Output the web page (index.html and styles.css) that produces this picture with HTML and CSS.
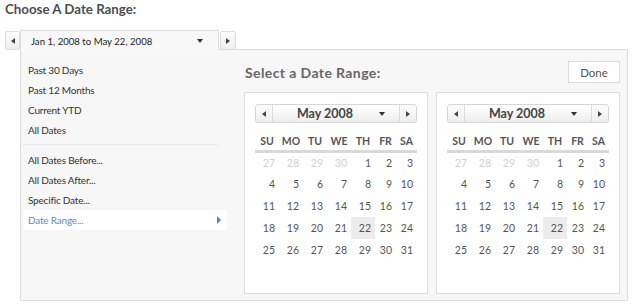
FILE: index.html
```html
<!DOCTYPE html>
<html lang="en">
<head>
    <meta charset="UTF-8">
    <title>Choose A Date Range</title>
    <link rel="stylesheet" href="styles.css">
</head>
<body>
    <h1 class="page-title">Choose A Date Range:</h1>

    <div class="range-bar">
        <button class="step-btn"><span class="tri tri-left"></span></button>
        <div class="range-field">
            <span class="range-text">Jan 1, 2008 to May 22, 2008</span>
            <span class="tri tri-down"></span>
        </div>
        <button class="step-btn step-next"><span class="tri tri-right"></span></button>
    </div>

    <div class="range-panel">
        <ul class="preset-list">
            <li>Past 30 Days</li>
            <li>Past 12 Months</li>
            <li>Current YTD</li>
            <li>All Dates</li>
            <li class="sep"></li>
            <li>All Dates Before...</li>
            <li>All Dates After...</li>
            <li>Specific Date...</li>
            <li class="active">Date Range... <span class="tri tri-blue"></span></li>
        </ul>

        <div class="range-pick">
            <div class="pick-head">
                <h2>Select a Date Range:</h2>
                <button class="done-btn">Done</button>
            </div>
            <div class="cal-row">
                <div class="cal">
                    <div class="cal-nav">
                        <span class="nav-btn"><span class="tri tri-left"></span></span>
                        <span class="nav-mid"><span class="month">May 2008</span><span class="tri tri-down"></span></span>
                        <span class="nav-btn nav-next"><span class="tri tri-right"></span></span>
                    </div>
                    <table class="cal-grid">
                        <colgroup><col class="c24"><col class="c24"><col class="c24"><col class="c24"><col class="c24"><col class="c21"><col class="c21"></colgroup>
                        <tr><th>SU</th><th>MO</th><th>TU</th><th>WE</th><th>TH</th><th>FR</th><th>SA</th></tr>
                        <tr><td class="off">27</td><td class="off">28</td><td class="off">29</td><td class="off">30</td><td>1</td><td>2</td><td>3</td></tr>
                        <tr><td>4</td><td>5</td><td>6</td><td>7</td><td>8</td><td>9</td><td>10</td></tr>
                        <tr><td>11</td><td>12</td><td>13</td><td>14</td><td>15</td><td>16</td><td>17</td></tr>
                        <tr><td>18</td><td>19</td><td>20</td><td>21</td><td class="sel">22</td><td>23</td><td>24</td></tr>
                        <tr><td>25</td><td>26</td><td>27</td><td>28</td><td>29</td><td>30</td><td>31</td></tr>
                    </table>
                </div>
                <div class="cal">
                    <div class="cal-nav">
                        <span class="nav-btn"><span class="tri tri-left"></span></span>
                        <span class="nav-mid"><span class="month">May 2008</span><span class="tri tri-down"></span></span>
                        <span class="nav-btn nav-next"><span class="tri tri-right"></span></span>
                    </div>
                    <table class="cal-grid">
                        <colgroup><col class="c24"><col class="c24"><col class="c24"><col class="c24"><col class="c24"><col class="c21"><col class="c21"></colgroup>
                        <tr><th>SU</th><th>MO</th><th>TU</th><th>WE</th><th>TH</th><th>FR</th><th>SA</th></tr>
                        <tr><td class="off">27</td><td class="off">28</td><td class="off">29</td><td class="off">30</td><td>1</td><td>2</td><td>3</td></tr>
                        <tr><td>4</td><td>5</td><td>6</td><td>7</td><td>8</td><td>9</td><td>10</td></tr>
                        <tr><td>11</td><td>12</td><td>13</td><td>14</td><td>15</td><td>16</td><td>17</td></tr>
                        <tr><td>18</td><td>19</td><td>20</td><td>21</td><td class="sel">22</td><td>23</td><td>24</td></tr>
                        <tr><td>25</td><td>26</td><td>27</td><td>28</td><td>29</td><td>30</td><td>31</td></tr>
                    </table>
                </div>
            </div>
        </div>
    </div>
</body>
</html>
```

FILE: styles.css
```css
* {
    margin: 0;
    padding: 0;
    box-sizing: border-box;
    font-family: 'Lato', 'Liberation Sans', sans-serif;
}

body {
    background: #fff;
    color: #333;
}

.page-title {
    font-size: 13.3px;
    font-weight: 700;
    line-height: 18px;
    color: #4d4d4d;
    padding-left: 5px;
    margin-bottom: 12px;
}

/* small css triangles */
.tri {
    display: inline-block;
    width: 0;
    height: 0;
    border-style: solid;
    border-color: transparent;
}

.tri-left {
    border-width: 3px 4px 3px 0;
    border-right-color: #444;
}

.tri-right {
    border-width: 3px 0 3px 4px;
    border-left-color: #444;
}

.tri-down {
    border-width: 4px 3px 0 3px;
    border-top-color: #333;
}

.tri-blue {
    border-width: 4px 0 4px 4px;
    border-left-color: #4a86c5;
}

.range-bar {
    display: flex;
    align-items: flex-start;
    padding-left: 5px;
}

.step-btn {
    width: 15px;
    height: 19px;
    margin-top: 1px;
    display: flex;
    align-items: center;
    justify-content: center;
    border: 1px solid #ddd;
    border-radius: 2px;
    background: linear-gradient(#fdfdfd, #efefef);
}

.step-next {
    width: 16px;
    margin-left: 1px;
}

.range-field {
    position: relative;
    z-index: 1;
    width: 199px;
    height: 20px;
    display: flex;
    align-items: center;
    padding-left: 10px;
    border: 1px solid #ddd;
    border-bottom: none;
    background: #f8f8f8;
}

.range-text {
    flex: 1;
    font-size: 9.6px;
    color: #222;
    padding-top: 1px;
}

.range-field .tri-down {
    margin-right: 15px;
}

.range-panel {
    display: flex;
    width: 608px;
    height: 252px;
    margin: -1px 0 0 20px;
    background: #f7f7f7;
    border: 1px solid #ddd;
}

.preset-list {
    list-style: none;
    width: 223px;
    padding: 10px 17px 0 2px;
}

.preset-list li {
    height: 20px;
    line-height: 20px;
    padding-left: 5px;
    font-size: 10px;
    letter-spacing: -0.2px;
    color: #333;
    display: flex;
    align-items: center;
}

.preset-list li.sep {
    height: 1px;
    margin: 4px 10px 5px 0;
    border-top: 1px dotted #ddd;
}

.preset-list li.active {
    background: #fff;
    color: #5b8dc8;
    justify-content: space-between;
    padding-right: 6px;
}

.range-pick {
    width: 376px;
    padding-top: 11px;
}

.pick-head {
    display: flex;
    align-items: center;
    justify-content: space-between;
    height: 22px;
    margin-bottom: 9px;
}

.pick-head h2 {
    font-size: 14px;
    font-weight: 700;
    letter-spacing: 0.4px;
    color: #666;
    padding-left: 1px;
}

.done-btn {
    width: 52px;
    height: 22px;
    font-size: 11.5px;
    color: #555;
    background: #fff;
    border: 1px solid #ddd;
}

.cal-row {
    display: flex;
    gap: 8px;
}

.cal {
    width: 184px;
    height: 202px;
    padding: 11px 10px;
    background: #fff;
    border: 1px solid #ddd;
}

.cal-nav {
    display: flex;
    height: 19px;
    margin-bottom: 8px;
    border: 1px solid #d6d6d6;
    border-radius: 3px;
    background: linear-gradient(#fff, #eee);
}

.nav-btn {
    width: 17px;
    display: flex;
    align-items: center;
    justify-content: center;
    border-right: 1px solid #ddd;
}

.nav-next {
    border-right: none;
    border-left: 1px solid #ddd;
}

.nav-mid {
    flex: 1;
    display: flex;
    align-items: center;
}

.month {
    flex: 1;
    text-align: center;
    font-size: 12.5px;
    font-weight: 700;
    color: #444;
}

.nav-mid .tri-down {
    margin: 1px 14px 0 2px;
}

.cal-grid {
    width: 162px;
    table-layout: fixed;
    border-collapse: collapse;
}

.c24 { width: 24px; }
.c21 { width: 21px; }

.cal-grid th {
    height: 20px;
    padding-top: 1px;
    font-size: 10.5px;
    font-weight: 700;
    color: #555;
    text-align: center;
    border-bottom: 3px solid #d9d9d9;
}

.cal-grid td {
    height: 22px;
    padding-right: 4px;
    text-align: right;
    font-size: 10.5px;
    color: #555;
}

.cal-grid td.off {
    color: #d0d0d0;
}

.cal-grid td.sel {
    background: #ececec;
}
```
